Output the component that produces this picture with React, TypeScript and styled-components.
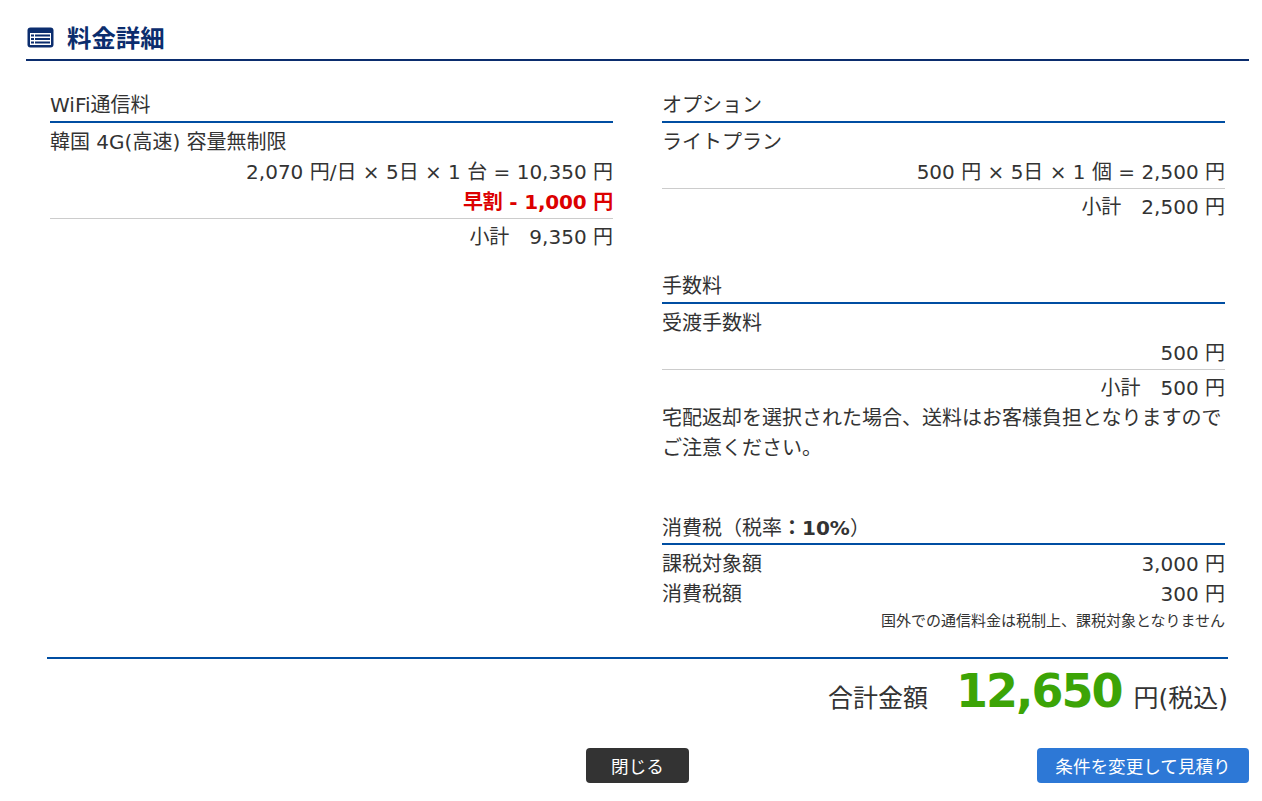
import React from "react";
import styled, { createGlobalStyle } from "styled-components";

const Global = createGlobalStyle`
  html, body { margin: 0; padding: 0; background: #fff; }
  body { font-family: "DejaVu Sans", "Noto Sans CJK JP", sans-serif; color: #333; }
`;

const Page = styled.div`
  width: 1262px;
  height: 801px;
  overflow: hidden;
  box-sizing: border-box;
  padding: 18px 13px 0 26px;
`;
const TitleBar = styled.h1`
  display: flex;
  align-items: center;
  gap: 13px;
  height: 41px;
  margin: 0;
  border-bottom: 2px solid #0b2d6e;
  font-size: 24.4px;
  line-height: 41px;
  font-weight: 700;
  color: #0b2d6e;
  padding-left: 1px;
`;
const TitleIcon = styled.svg`
  margin-bottom: 2px;
`;
const Columns = styled.div`
  display: grid;
  grid-template-columns: 563px 563px;
  column-gap: 49px;
  padding: 29px 24px 0;
  height: 596px;
  box-sizing: border-box;
`;
const Section = styled.section<{ $gap?: number }>`
  margin-bottom: ${(p) => p.$gap ?? 0}px;
`;
const Head = styled.h2`
  margin: 0 0 4px;
  height: 31px;
  line-height: 30px;
  border-bottom: 2px solid #004ea2;
  font-size: 20px;
  font-weight: 400;
  box-sizing: content-box;
`;
const Row = styled.div<{ $right?: boolean; $sale?: boolean }>`
  font-size: 20px;
  line-height: 30px;
  height: 30px;
  white-space: nowrap;
  text-align: ${(p) => (p.$right ? "right" : "left")};
  color: ${(p) => (p.$sale ? "#dc0000" : "inherit")};
  font-weight: ${(p) => (p.$sale ? 700 : 400)};
  letter-spacing: ${(p) => (p.$sale ? "-0.2px" : "0")};
`;
const Split = styled(Row)`
  display: flex;
  justify-content: space-between;
`;
const Subtotal = styled.div`
  border-top: 1px solid #ccc;
  margin-top: 1px;
  padding-top: 3px;
  font-size: 20px;
  line-height: 30px;
  text-align: right;
  white-space: pre;
`;
const Note = styled.p`
  margin: 0;
  font-size: 20px;
  line-height: 30px;
`;
const SmallNote = styled.p`
  margin: 0;
  font-size: 15px;
  line-height: 24px;
  text-align: right;
  white-space: nowrap;
`;
const Colon = styled.b`
  font-family: "Noto Sans CJK JP", sans-serif;
`;
const Total = styled.div`
  margin: 0 21px;
  height: 89px;
  border-top: 2px solid #004ea2;
  display: flex;
  justify-content: flex-end;
  align-items: baseline;
  font-size: 25px;
  line-height: 64px;
`;
const Amount = styled.strong`
  font-size: 46px;
  letter-spacing: -2px;
  color: #3ca406;
  margin: 0 12px 0 28px;
`;
const Actions = styled.div`
  display: grid;
  grid-template-columns: 1fr auto 1fr;
  align-items: center;
`;
const Button = styled.button<{ $primary?: boolean }>`
  grid-column: ${(p) => (p.$primary ? 3 : 2)};
  justify-self: ${(p) => (p.$primary ? "end" : "center")};
  width: ${(p) => (p.$primary ? 212 : 103)}px;
  height: 35px;
  padding: 0;
  border: 0;
  border-radius: 4px;
  background: ${(p) => (p.$primary ? "#2d78d6" : "#333")};
  color: #fff;
  font-family: inherit;
  font-size: 17.6px;
`;

const ListIcon = () => (
  <TitleIcon width="27" height="21" viewBox="0 0 27 21">
    <rect x="0.5" y="0.5" width="26" height="20" rx="3" fill="#0b2d6e" />
    <rect x="3" y="6" width="21" height="12" fill="#fff" />
    <g fill="#0b2d6e">
      <rect x="4" y="7.5" width="3" height="2" />
      <rect x="4" y="11" width="3" height="2" />
      <rect x="4" y="14.5" width="3" height="2" />
      <rect x="8" y="7.5" width="15" height="2" />
      <rect x="8" y="11" width="15" height="2" />
      <rect x="8" y="14.5" width="15" height="2" />
    </g>
  </TitleIcon>
);

export default function App() {
  return (
    <Page>
      <Global />
      <TitleBar>
        <ListIcon />
        料金詳細
      </TitleBar>
      <Columns>
        <div>
          <Section>
            <Head>WiFi通信料</Head>
            <Row>韓国 4G(高速) 容量無制限</Row>
            <Row $right>2,070 円/日 × 5日 × 1 台 = 10,350 円</Row>
            <Row $right $sale>早割 - 1,000 円</Row>
            <Subtotal>小計　9,350 円</Subtotal>
          </Section>
        </div>
        <div>
          <Section $gap={49}>
            <Head>オプション</Head>
            <Row>ライトプラン</Row>
            <Row $right>500 円 × 5日 × 1 個 = 2,500 円</Row>
            <Subtotal>小計　2,500 円</Subtotal>
          </Section>
          <Section $gap={49}>
            <Head>手数料</Head>
            <Row>受渡手数料</Row>
            <Row $right>500 円</Row>
            <Subtotal>小計　500 円</Subtotal>
            <Note>宅配返却を選択された場合、送料はお客様負担となりますのでご注意ください。</Note>
          </Section>
          <Section>
            <Head>消費税（税率<Colon>：</Colon><b>10%</b>）</Head>
            <Split><span>課税対象額</span><span>3,000 円</span></Split>
            <Split><span>消費税額</span><span>300 円</span></Split>
            <SmallNote>国外での通信料金は税制上、課税対象となりません</SmallNote>
          </Section>
        </div>
      </Columns>
      <Total>
        合計金額<Amount>12,650</Amount>円(税込)
      </Total>
      <Actions>
        <Button>閉じる</Button>
        <Button $primary>条件を変更して見積り</Button>
      </Actions>
    </Page>
  );
}
